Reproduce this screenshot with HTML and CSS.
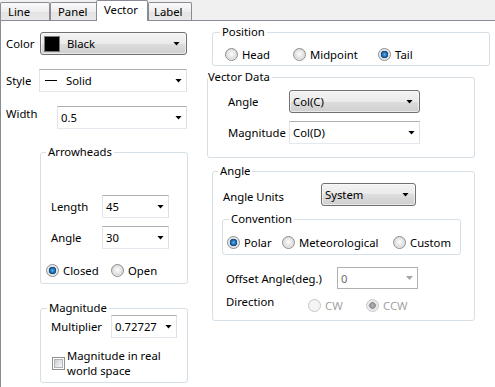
FILE: index.html
```html
<!DOCTYPE html>
<html lang="en">
<head>
  <meta charset="UTF-8">
  <title>Vector Properties</title>
  <link rel="stylesheet" href="styles.css">
</head>
<body>
  <div class="tabs">
    <span class="tab tab-line">Line</span>
    <span class="tab tab-panel">Panel</span>
    <span class="tab tab-vector active">Vector</span>
    <span class="tab tab-label">Label</span>
  </div>

  <div class="page">
    <div class="left">
      <div class="row row-color">
        <span class="lbl">Color</span>
        <div class="combo list">
          <span class="swatch"></span>
          <span class="val">Black</span>
        </div>
      </div>
      <div class="row row-style">
        <span class="lbl">Style</span>
        <div class="combo">
          <span class="dash"></span>
          <span class="val">Solid</span>
        </div>
      </div>
      <div class="row row-width">
        <span class="lbl">Width</span>
        <div class="combo">0.5</div>
      </div>

      <div class="group arrowheads">
        <div class="group-title">Arrowheads</div>
        <div class="row row-length">
          <span class="lbl">Length</span>
          <div class="combo">45</div>
        </div>
        <div class="row row-angle">
          <span class="lbl">Angle</span>
          <div class="combo">30</div>
        </div>
        <div class="options">
          <label class="opt opt-closed"><span class="radio on"></span>Closed</label>
          <label class="opt"><span class="radio"></span>Open</label>
        </div>
      </div>

      <div class="group magnitude">
        <div class="group-title">Magnitude</div>
        <div class="row row-mult">
          <span class="lbl">Multiplier</span>
          <div class="combo">0.72727</div>
        </div>
        <label class="check-row">
          <span class="check"></span>
          <span class="check-text">Magnitude in real world space</span>
        </label>
      </div>
    </div>

    <div class="right">
      <div class="group position">
        <div class="group-title">Position</div>
        <div class="options">
          <label class="opt opt-head"><span class="radio"></span>Head</label>
          <label class="opt opt-mid"><span class="radio"></span>Midpoint</label>
          <label class="opt"><span class="radio on"></span>Tail</label>
        </div>
      </div>

      <div class="group vector-data">
        <div class="group-title">Vector Data</div>
        <div class="row row-vangle">
          <span class="lbl">Angle</span>
          <div class="combo list">Col(C)</div>
        </div>
        <div class="row row-vmag">
          <span class="lbl">Magnitude</span>
          <div class="combo">Col(D)</div>
        </div>
      </div>

      <div class="group angle">
        <div class="group-title">Angle</div>
        <div class="row row-units">
          <span class="lbl">Angle Units</span>
          <div class="combo list">System</div>
        </div>
        <div class="group convention">
          <div class="group-title">Convention</div>
          <div class="options">
            <label class="opt opt-polar"><span class="radio on"></span>Polar</label>
            <label class="opt opt-meteo"><span class="radio"></span>Meteorological</label>
            <label class="opt"><span class="radio"></span>Custom</label>
          </div>
        </div>
        <div class="row row-offset">
          <span class="lbl">Offset Angle(deg.)</span>
          <div class="combo disabled">0</div>
        </div>
        <div class="row row-dir">
          <span class="lbl">Direction</span>
          <div class="options">
            <label class="opt opt-cw disabled"><span class="radio"></span>CW</label>
            <label class="opt disabled"><span class="radio on"></span>CCW</label>
          </div>
        </div>
      </div>
    </div>
  </div>
</body>
</html>
```

FILE: styles.css
```css
body { margin: 0; font: 11.3px/15px "Noto Sans", "Liberation Sans", sans-serif; color: #000; background: #fff; overflow: hidden; }

/* tab strip */
.tabs { display: flex; align-items: flex-end; height: 20px; background: #f0f0f0; border-bottom: 1px solid #898c95; }
.tab { box-sizing: border-box; height: 18px; padding: 1px 0 0 7px; border: 1px solid #898c95; border-bottom: 0; border-radius: 2px 2px 0 0; background: linear-gradient(#fafafa, #ededed 50%, #e3e3e3 51%, #e8e8e8); line-height: 16px; }
.tab-line { width: 50px; }
.tab-panel { width: 48px; }
.tab-vector { width: 52px; margin-left: -2px; }
.tab-label { width: 44px; padding-left: 5px; }
.tab.active { height: 21px; margin-bottom: -1px; padding-top: 0; background: #fff; line-height: 18px; z-index: 1; }

.page { display: flex; height: 366px; border-left: 1px solid #898c95; }
.left { box-sizing: border-box; width: 206px; padding-left: 5px; }
.right { flex: 1; }

/* rows and combos */
.row { display: flex; align-items: center; height: 23px; }
.lbl { flex: none; }
.combo { box-sizing: border-box; display: flex; align-items: center; height: 23px; padding-left: 3px; border: 1px solid; border-color: #abadb3 #dbdfe6 #e3e9ef #e2e3ea; background: #fff; white-space: nowrap; }
.combo::after { content: ""; width: 7px; height: 4px; margin: 0 4px 0 auto; background: #000; clip-path: polygon(0 0, 100% 0, 50% 100%); }
.combo.list { border: 1px solid #707070; border-radius: 3px; background: linear-gradient(#f2f2f2, #ebebeb 50%, #dddddd 50%, #cfcfcf); box-shadow: inset 0 0 0 1px rgba(255, 255, 255, .55); }
.combo.list::after { margin-right: 6px; }
.combo.disabled { border-color: #adb2b5; color: #6d6d6d; }
.combo.disabled::after { background: #a6a6a6; }

.swatch { box-sizing: border-box; width: 16px; height: 16px; background: #000; border: 1px solid #7a7a7a; }
.swatch + .val { margin-left: 7px; }
.dash { width: 12px; height: 1px; margin-left: 2px; background: #000; }
.dash + .val { margin-left: 9px; }

.row-color { margin-top: 11px; }
.row-color .lbl { width: 34px; }
.row-color .combo { width: 147px; }
.row-style { margin-top: 14px; }
.row-style .lbl { width: 33px; }
.row-style .combo { width: 148px; }
.row-width { margin-top: 14px; align-items: flex-start; }
.row-width .lbl { width: 51px; }
.row-width .combo { width: 130px; }

/* group boxes */
.group { box-sizing: border-box; border: 1px solid #d5dfe5; border-radius: 3px; }
.group-title { width: fit-content; margin: -9px 0 0 5px; padding: 0 2px; background: #fff; }

.options { display: flex; align-items: center; height: 13px; }
.opt { display: flex; align-items: center; flex: none; }
.opt.disabled { color: #a3a3a3; }
.radio { box-sizing: border-box; flex: none; width: 13px; height: 13px; margin-right: 4px; border: 1px solid #8c8c8c; border-radius: 50%; background: radial-gradient(circle at 50% 45%, #fdfdfd 0, #f0f0f0 2px, #dcdcdc 5px, #f4f4f4 6px); }
.radio.on { background: radial-gradient(circle, #62bdf4 0, #2b84cc 1.5px, #12467a 3.5px, #d9dde0 4px, #f4f4f4 6px); }
.disabled .radio { border-color: #c6c6c6; background: #f4f4f4; }
.disabled .radio.on { background: radial-gradient(circle, #b5b5b5 0, #8d8d8d 3px, #e2e2e2 3.6px, #f4f4f4 6px); }

.arrowheads { width: 148px; height: 132px; margin: 23px 0 0 34px; }
.arrowheads .row { padding-left: 10px; }
.arrowheads .lbl { width: 51px; }
.arrowheads .combo { width: 67px; }
.row-length { margin-top: 36px; }
.row-angle { margin-top: 8px; }
.arrowheads .options { margin-top: 15px; padding-left: 5px; }
.opt-closed { width: 65px; }

.magnitude { width: 148px; height: 75px; margin: 24px 0 0 34px; }
.magnitude .group-title { margin-left: 6px; }
.row-mult { padding-left: 10px; }
.row-mult .lbl { width: 60px; }
.row-mult .combo { width: 66px; }
.check-row { display: flex; align-items: center; margin-top: 10px; padding-left: 11px; }
.check { box-sizing: border-box; flex: none; width: 13px; height: 13px; border: 1px solid #8e8f8f; background: #fff; }
.check::before { content: ""; display: block; width: 7px; height: 7px; margin: 1px; border: 1px solid #b0b4ba; background: linear-gradient(135deg, #cbcfd5, #f6f6f6); }
.check-text { width: 105px; margin-left: 2px; }

.position { width: 278px; height: 34px; margin: 11px 0 0 5px; }
.position .group-title { margin-left: 7px; }
.position .options { margin-top: 9px; padding-left: 12px; }
.opt-head { width: 68px; }
.opt-mid { width: 85px; }

.vector-data { width: 268px; height: 81px; margin-top: 11px; }
.vector-data .group-title { margin-left: 0; padding-left: 0; }
.vector-data .row { padding-left: 20px; }
.vector-data .lbl { width: 61px; }
.vector-data .combo { width: 131px; }
.row-vangle { margin-top: 6px; }
.row-vmag { margin-top: 8px; }

.angle { width: 263px; height: 150px; margin: 13px 0 0 5px; }
.row-units { margin-top: 5px; padding-left: 10px; align-items: flex-start; }
.row-units .lbl { width: 98px; margin-top: 6px; }
.row-units .combo { width: 95px; }
.convention { width: 239px; height: 36px; margin: 13px 0 0 9px; }
.convention .group-title { margin-left: 6px; }
.convention .options { margin-top: 10px; padding-left: 4px; }
.opt-polar { width: 55px; }
.opt-meteo { width: 111px; }
.row-offset { height: 22px; margin-top: 12px; padding-left: 13px; }
.row-offset .lbl { width: 111px; }
.row-offset .combo { width: 81px; height: 22px; }
.row-dir { height: auto; margin-top: 5px; padding-left: 13px; align-items: flex-start; }
.row-dir .lbl { width: 82px; }
.row-dir .options { margin-top: 5px; }
.opt-cw { width: 58px; }
```
